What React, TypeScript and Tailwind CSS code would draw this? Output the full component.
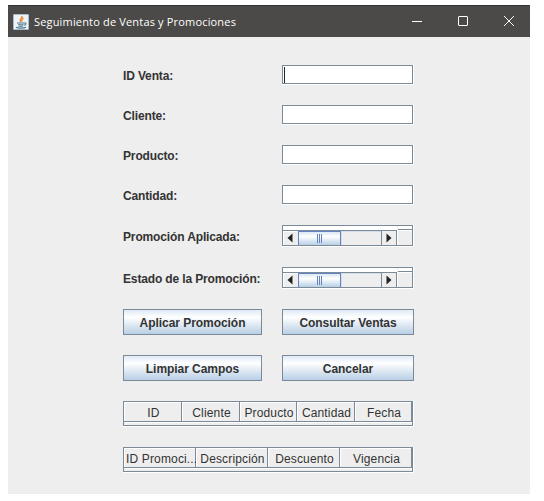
import React from "react";

function JavaIcon() {
  return (
    <svg width="16" height="16" viewBox="0 0 16 16" className="shrink-0">
      <rect x="0.5" y="0.5" width="15" height="15" rx="0.5" fill="#eef3f6" stroke="#a9bccb" />
      <path d="M9 2C9.800 4.200 5.800 4.600 7.600 8" fill="none" stroke="#e8862e" strokeWidth="1.5" />
      <path d="M10.600 4C8.400 5.200 8.200 6 9 7.800" fill="none" stroke="#e8862e" strokeWidth="1.200" />
      <path d="M4 9h7.300M11 9c2.800-.5 2.400 1.900-.2 2.300M5 10.700h5.500M5.500 12.200h4.500" fill="none" stroke="#4f7792" strokeWidth="1.100" />
      <path d="M3 13.200c2 1.200 8 1.200 10 0" fill="none" stroke="#4f7792" strokeWidth="1.100" />
    </svg>
  );
}

function TitleBar() {
  return (
    <header className="flex h-8 items-center border-t border-[#2c373c] bg-[#4b4a48] pl-[5px] pr-[15px] text-white">
      <JavaIcon />
      <span className="ml-[5px] whitespace-nowrap font-['Open_Sans','Noto_Sans',sans-serif] text-[11px] leading-4 tracking-[0.17px]">
        Seguimiento de Ventas y Promociones
      </span>
      <div className="mb-px ml-auto flex gap-[34px]">
        <svg width="12" height="12" viewBox="0 0 12 12" fill="none" stroke="white"><path d="M1 6.500h10" /></svg>
        <svg width="12" height="12" viewBox="0 0 12 12" fill="none" stroke="white"><rect x="1.500" y="1.500" width="9" height="9" rx="0.500" /></svg>
        <svg width="12" height="12" viewBox="0 0 12 12" fill="none" stroke="white"><path d="M1 1l10 10M11 1L1 11" /></svg>
      </div>
    </header>
  );
}

function Label({ text }: { text: string }) {
  return <label className="block w-[159px] shrink-0 whitespace-nowrap text-[12px] font-bold leading-[22px] tracking-[-0.14px]">{text}</label>;
}

function Field({ label, focused }: { label: string; focused?: boolean }) {
  return (
    <div className="flex h-10 items-start">
      <Label text={label} />
      <div className="w-[132px] border-b border-r border-white">
        <div className="h-[19px] border border-[#7a8a99] bg-white pl-px pt-px">
          {focused && <div className="h-4 w-px bg-[#22272c]" />}
        </div>
      </div>
    </div>
  );
}

function Arrow({ right }: { right?: boolean }) {
  return (
    <svg width="14" height="14" viewBox="0 0 14 14" fill="#222">
      <path d={right ? "M4.500 2.500v9l5-4.500z" : "M8.500 1.500v9l-5-4.500z"} />
    </svg>
  );
}

function ScrollPane({ label }: { label: string }) {
  return (
    <div className="flex h-[42px] items-start">
      <div className="pt-px"><Label text={label} /></div>
      <div className="w-[132px] border-b border-r border-white">
        <div className="flex h-[21px] border border-[#7a8a99]">
          <div className="w-[114px]">
            <div className="h-1 bg-white" />
            <div className="flex h-[15px] border-t border-[#7a8a99]">
              <div className="w-[15px] border-l border-t border-white"><Arrow /></div>
              <div className="flex w-[43px] items-center justify-center gap-px border-x border-t border-[#6382bf] bg-linear-to-b from-[#d9e7f4] via-white via-35% to-[#b8cfe5]">
                <i className="h-[9px] w-px bg-[#6382bf]" />
                <i className="h-[9px] w-px bg-[#6382bf]" />
                <i className="h-[9px] w-px bg-[#6382bf]" />
              </div>
              <div className="w-10 border-l border-t border-[#d5dde6]" />
              <div className="w-4 border-x border-[#7a8a99]"><Arrow right /></div>
            </div>
          </div>
          <div className="flex-1">
            <div className="ml-px h-1 border-b border-[#7a8a99] bg-white" />
            <div className="h-[15px] border-l border-t border-white" />
          </div>
        </div>
      </div>
    </div>
  );
}

function Button({ text, wide }: { text: string; wide?: boolean }) {
  return (
    <button className={`${wide ? "w-[139px]" : "w-[132px]"} h-[26px] border border-[#7a8a99] bg-linear-to-b from-[#dfeaf5] via-white via-30% to-[#b8cfe5] pt-0.5 text-[12px] font-bold leading-[22px] tracking-[-0.05px]`}>
      {text}
    </button>
  );
}

function Table({ columns }: { columns: { name: string; width: string }[] }) {
  return (
    <div className="h-[46px]">
      <div className="w-[291px] border-b border-r border-white">
        <div className="h-[25px] border border-[#7a8a99]">
          <div className="flex h-5">
            {columns.map((c) => (
              <div key={c.name} className={`${c.width} shrink-0 border-b border-r border-[#7a8a99]`}>
                <div className="h-[19px] whitespace-nowrap border-l border-t border-white pl-px text-center text-[12px] leading-[21px] tracking-[0.15px]">
                  {c.name}
                </div>
              </div>
            ))}
          </div>
          <div className="ml-px h-px bg-white" />
        </div>
      </div>
    </div>
  );
}

const salesColumns = [
  { name: "ID", width: "w-[58px]" },
  { name: "Cliente", width: "w-[58px]" },
  { name: "Producto", width: "w-[57px]" },
  { name: "Cantidad", width: "w-[58px]" },
  { name: "Fecha", width: "w-[57px]" },
];
const promoColumns = [
  { name: "ID Promoci...", width: "w-[72px]" },
  { name: "Descripción", width: "w-[72px]" },
  { name: "Descuento", width: "w-[72px]" },
  { name: "Vigencia", width: "w-[72px]" },
];

export default function App() {
  return (
    <div className="h-[501px] w-[544px] overflow-hidden bg-white pl-2 pt-[5px] font-['Liberation_Sans',Arial,sans-serif] text-[#333]">
      <div className="h-[489px] w-[522px] bg-[#eeeeee]">
        <TitleBar />
        <main className="pl-[115px] pt-7">
          <Field label="ID Venta:" focused />
          <Field label="Cliente:" />
          <Field label="Producto:" />
          <Field label="Cantidad:" />
          <ScrollPane label="Promoción Aplicada:" />
          <ScrollPane label="Estado de la Promoción:" />
          <div className="flex h-[46px] items-start gap-5">
            <Button text="Aplicar Promoción" wide />
            <Button text="Consultar Ventas" />
          </div>
          <div className="flex h-[46px] items-start gap-5">
            <Button text="Limpiar Campos" wide />
            <Button text="Cancelar" />
          </div>
          <Table columns={salesColumns} />
          <Table columns={promoColumns} />
        </main>
      </div>
    </div>
  );
}
